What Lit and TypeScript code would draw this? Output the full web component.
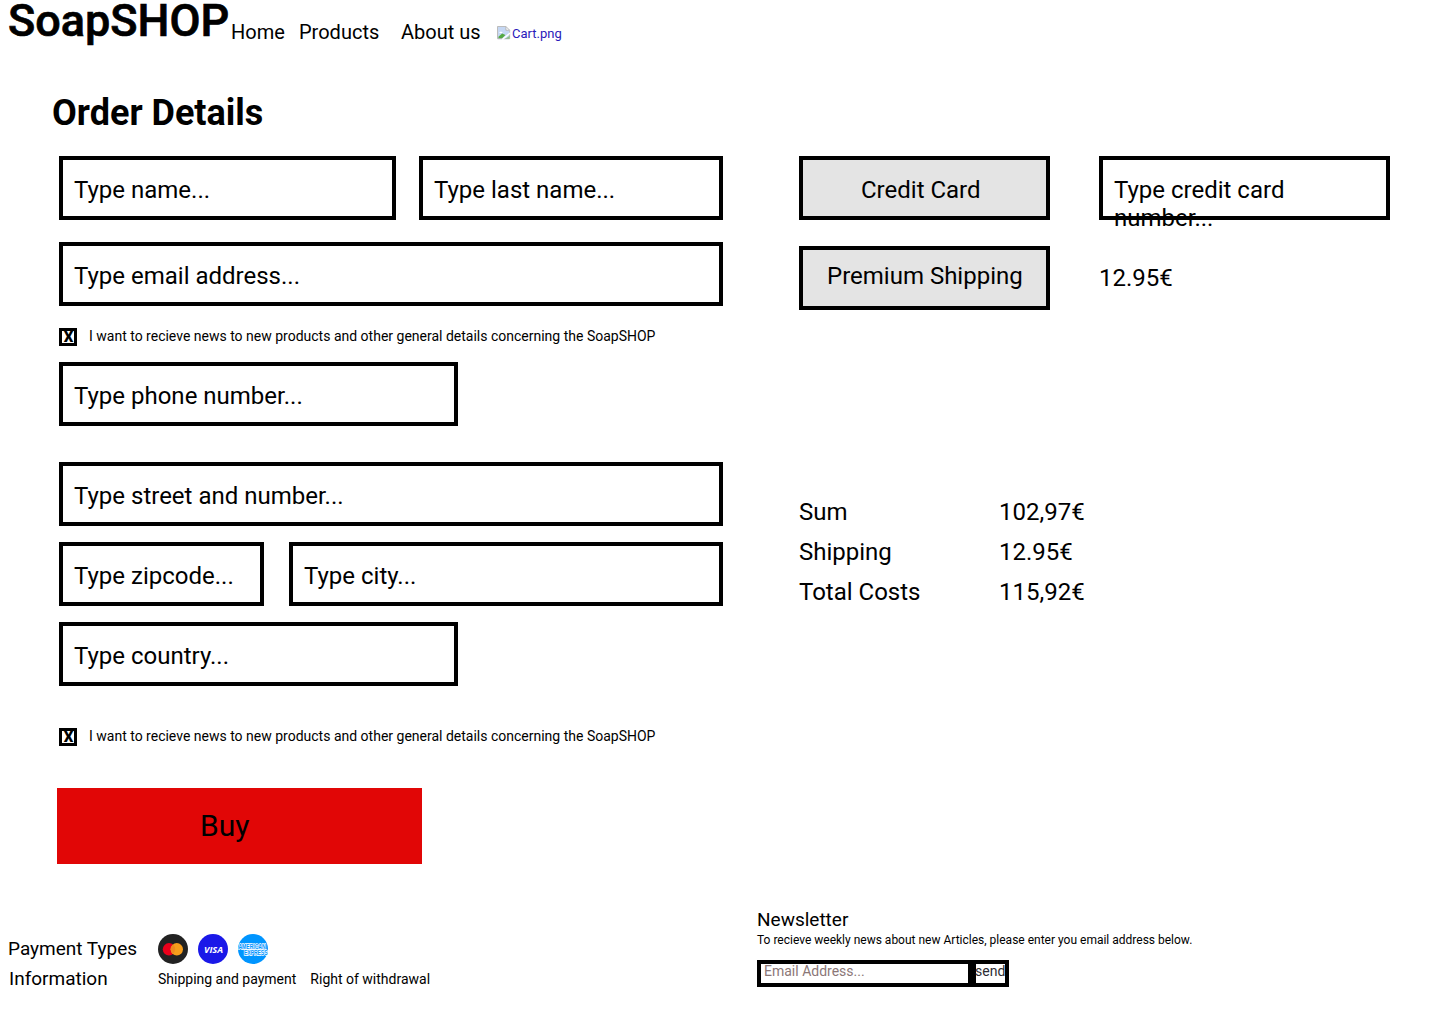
import { LitElement, html, css } from "lit";
import { customElement } from "lit/decorators.js";

@customElement("app-root")
export class AppRoot extends LitElement {
  static styles = css`
    :host { display: block; width: 1440px; height: 1024px; background: #fff; color: #000; font-family: Roboto, sans-serif; }
    * { box-sizing: border-box; }
    h1, h2, p { margin: 0; font-weight: 400; }
    .page { display: flex; flex-direction: column; height: 1024px; }
    .top { display: flex; height: 92px; padding-left: 8px; font-size: 20px; line-height: 24px; white-space: nowrap; }
    .logo { width: 223px; font-size: 45px; font-weight: 500; line-height: 42px; -webkit-text-stroke: 0.7px #000; }
    .link { margin-top: 20px; }
    .home { width: 68px; }
    .products { width: 102px; }
    .about { width: 96px; }
    .cart { display: flex; margin-top: 26px; font-size: 13px; line-height: 15px; color: #2a1aba; }
    .cart svg { width: 15px; height: 15px; }
    .title { padding-left: 52px; height: 64px; font-size: 36px; font-weight: 700; line-height: 42px; }
    .main { display: flex; height: 752px; padding-left: 59px; font-size: 24px; line-height: 28px; white-space: nowrap; }
    .form { width: 740px; }
    .row { display: flex; }
    .box { height: 64px; border: 4px solid #000; padding: 16px 0 0 11px; background: #fff; }
    .name { width: 337px; margin-right: 23px; }
    .last { width: 304px; }
    .full { width: 664px; }
    .email { margin-top: 22px; }
    .half { width: 399px; }
    .street { margin-top: 36px; }
    .zip { width: 205px; margin-right: 25px; }
    .city { width: 434px; }
    .gap { margin-top: 16px; }
    .check { display: flex; height: 18px; margin: 22px 0 16px; font-size: 14px; line-height: 16px; }
    .last-check { margin: 42px 0 42px; }
    .tick { width: 18px; height: 18px; border: 3px solid #000; margin-right: 12px; font-size: 15px; font-weight: 900; line-height: 12px; text-align: center; padding-left: 1px; }
    .buy { width: 365px; height: 76px; margin-left: -2px; background: #e10606; font-size: 30px; line-height: 35px; padding: 20px 0 0 143px; }
    .option { width: 251px; margin-right: 49px; background: #e4e4e4; }
    .credit { padding-left: 58px; }
    .shipping { padding: 12px 0 0 24px; }
    .number { width: 291px; padding-right: 40px; white-space: normal; }
    .ship-row { margin-top: 26px; }
    .price { padding-top: 18px; }
    .sums { display: grid; grid-template-columns: 200px 200px; grid-auto-rows: 40px; margin-top: 188px; }
    .foot { display: flex; padding-left: 8px; white-space: nowrap; }
    .info { width: 749px; padding-top: 26px; }
    .line { display: flex; height: 30px; font-size: 20px; line-height: 23px; }
    .label { width: 150px; padding-top: 3px; font-size: 19px; }
    .label.inset { padding-left: 1px; }
    .cards { display: flex; gap: 10px; }
    .cards svg { width: 30px; height: 30px; overflow: visible; }
    .small { font-size: 14px; line-height: 16px; padding-top: 7px; margin-right: 14px; }
    .news-title { font-size: 19px; line-height: 24px; }
    .news-text { font-size: 12px; line-height: 14px; margin-top: 1px; }
    .mail { display: flex; margin-top: 13px; height: 27px; font-size: 14px; line-height: 16px; }
    .field { width: 215px; border: 4px solid #000; padding-left: 3px; color: #8b7777; line-height: 15px; }
    .send { width: 37px; border: 4px solid #000; color: #2d2d33; line-height: 15px; text-indent: -1px; }
    .visa { font: italic 700 9.6px "Open Sans", sans-serif; }
    .amex { font: 700 6.4px "Liberation Sans", sans-serif; }
  `;

  private check(extra = "") {
    return html`<div class="check ${extra}"><span class="tick">X</span><span>I want to recieve news to new products and other general details concerning the SoapSHOP</span></div>`;
  }

  render() {
    return html`<div class="page">
      <header class="top">
        <h1 class="logo">SoapSHOP</h1>
        <span class="link home">Home</span><span class="link products">Products</span><span class="link about">About us</span>
        <span class="cart"><svg viewBox="0 0 16 16">
          <path d="M1 1h9l3 3v10H1z" fill="#c5d7f3"/>
          <path d="M2.5 7.5c0-1 .7-1.5 1.5-1.5s2 .5 2 1.500z" fill="#fff"/>
          <path d="M1.500 13.500v-2l4-3.500 3.500 1.500-4 4z" fill="#54a943"/>
          <path d="M13.500 4.500v9h-13V.5h9" fill="none" stroke="#b5b5b5"/>
          <path d="M9.500.5v4h4z" fill="#fff" stroke="#b5b5b5"/>
          <path d="M5.500 14.500l8.500-7" stroke="#fff" stroke-width="1.500"/>
          <path d="M9 13.500h4.500v-3z" fill="#8fbf85"/>
        </svg>Cart.png</span>
      </header>
      <h2 class="title">Order Details</h2>
      <main class="main">
        <section class="form">
          <div class="row"><div class="box name">Type name...</div><div class="box last">Type last name...</div></div>
          <div class="box full email">Type email address...</div>
          ${this.check()}
          <div class="box half">Type phone number...</div>
          <div class="box full street">Type street and number...</div>
          <div class="row gap"><div class="box zip">Type zipcode...</div><div class="box city">Type city...</div></div>
          <div class="box half gap">Type country...</div>
          ${this.check("last-check")}
          <div class="buy">Buy</div>
        </section>
        <section>
          <div class="row"><div class="box option credit">Credit Card</div><div class="box number">Type credit card number...</div></div>
          <div class="row ship-row"><div class="box option shipping">Premium Shipping</div><span class="price">12.95€</span></div>
          <div class="sums"><span>Sum</span><span>102,97€</span><span>Shipping</span><span>12.95€</span><span>Total Costs</span><span>115,92€</span></div>
        </section>
      </main>
      <footer class="foot">
        <div class="info">
          <div class="line"><span class="label">Payment Types</span>
            <span class="cards">
              <svg viewBox="0 0 30 30"><circle cx="15" cy="15" r="15" fill="#222"/><circle cx="11" cy="15.300" r="6.200" fill="#eb001b"/><circle cx="18.800" cy="15.300" r="6.200" fill="#f79e1b"/><path d="M14.900 10.500a6.200 6.200 0 0 1 0 9.600a6.200 6.200 0 0 1 0-9.600z" fill="#f08a20"/></svg>
              <svg viewBox="0 0 30 30"><circle cx="15" cy="15" r="15" fill="#1a18e8"/><text class="visa" x="6" y="18.500" textLength="19" lengthAdjust="spacingAndGlyphs" fill="#fff">VISA</text></svg>
              <svg viewBox="0 0 30 30"><circle cx="15" cy="15" r="15" fill="#0095ff"/><g class="amex" fill="#0095ff" stroke="#fff" stroke-width="1.300" paint-order="stroke"><text x=".5" y="15" textLength="27" lengthAdjust="spacingAndGlyphs">AMERICAN</text><text x="6" y="20.800" textLength="23.500" lengthAdjust="spacingAndGlyphs">EXPRESS</text></g></svg>
            </span>
          </div>
          <div class="line"><span class="label inset">Information</span><span class="small">Shipping and payment</span><span class="small">Right of withdrawal</span></div>
        </div>
        <section>
          <p class="news-title">Newsletter</p>
          <p class="news-text">To recieve weekly news about new Articles, please enter you email address below.</p>
          <div class="mail"><div class="field">Email Address...</div><div class="send">send</div></div>
        </section>
      </footer>
    </div>`;
  }
}
